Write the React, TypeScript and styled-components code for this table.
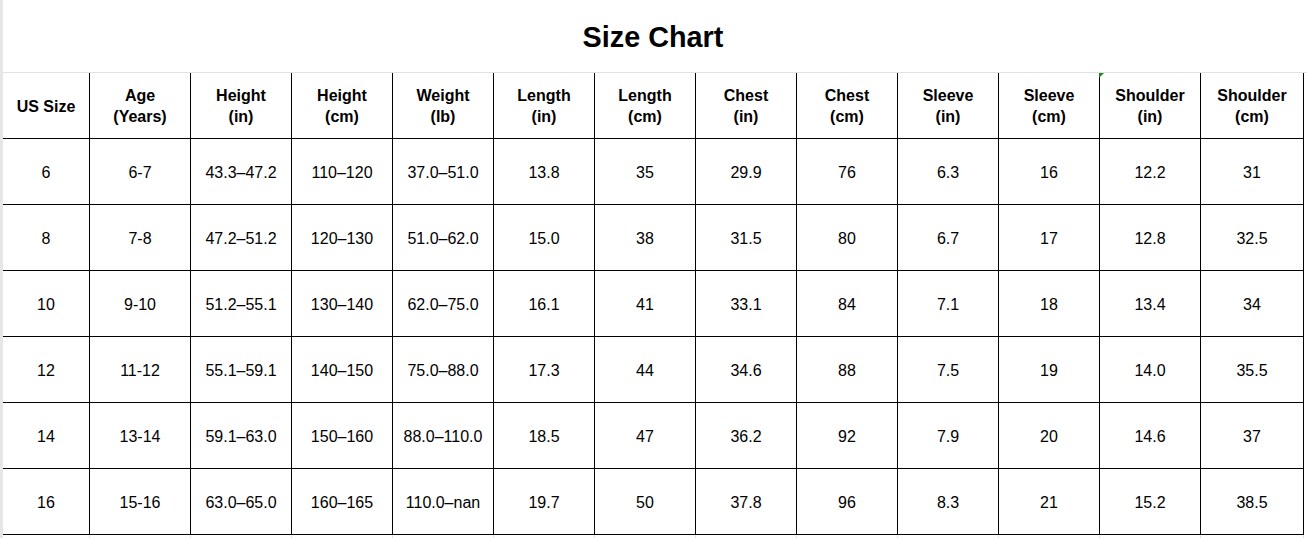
import React from "react";
import styled, { createGlobalStyle } from "styled-components";

const GlobalStyle = createGlobalStyle`
  html, body {
    margin: 0;
    padding: 0;
    background: #ffffff;
  }
  body {
    font-family: "Liberation Sans", Arial, sans-serif;
    color: #000000;
  }
`;

const Sheet = styled.div`
  width: 1304px;
  height: 538px;
  overflow: hidden;
  border-left: 3px solid #e6e6e6;
  background: #ffffff;
`;

const TitleBar = styled.div`
  height: 72px;
  display: flex;
  align-items: center;
  justify-content: center;
  border-bottom: 1px solid #e2e2e2;
  padding-right: 4px;
`;

const Title = styled.h1`
  margin: 0;
  font-size: 28.8px;
  font-weight: 700;
  line-height: 1;
  padding-top: 2px;
`;

const Grid = styled.div`
  display: grid;
  grid-template-columns: 87px repeat(11, 101px) 103px;
`;

const Cell = styled.div<{ $head?: boolean; $ghost?: boolean }>`
  position: relative;
  box-sizing: border-box;
  height: ${(p) => (p.$ghost ? "4px" : "66px")};
  border-right: 1px solid ${(p) => (p.$ghost ? "#e2e2e2" : "#000000")};
  border-bottom: ${(p) => (p.$ghost ? "none" : "1px solid #000000")};
  display: flex;
  align-items: center;
  justify-content: center;
  text-align: center;
  font-size: 16px;
  font-weight: ${(p) => (p.$head ? 700 : 400)};
  line-height: ${(p) => (p.$head ? "21px" : "18px")};
  padding-top: ${(p) => (p.$head ? "1px" : "3px")};
`;

const ErrorMark = styled.span`
  position: absolute;
  top: 0;
  left: -1px;
  width: 0;
  height: 0;
  border-top: 5px solid #1b8a1b;
  border-right: 5px solid transparent;
`;

const headers: string[][] = [
  ["US Size"],
  ["Age", "(Years)"],
  ["Height", "(in)"],
  ["Height", "(cm)"],
  ["Weight", "(lb)"],
  ["Length", "(in)"],
  ["Length", "(cm)"],
  ["Chest", "(in)"],
  ["Chest", "(cm)"],
  ["Sleeve", "(in)"],
  ["Sleeve", "(cm)"],
  ["Shoulder", "(in)"],
  ["Shoulder", "(cm)"],
];

const rows: string[][] = [
  ["6", "6-7", "43.3–47.2", "110–120", "37.0–51.0", "13.8", "35", "29.9", "76", "6.3", "16", "12.2", "31"],
  ["8", "7-8", "47.2–51.2", "120–130", "51.0–62.0", "15.0", "38", "31.5", "80", "6.7", "17", "12.8", "32.5"],
  ["10", "9-10", "51.2–55.1", "130–140", "62.0–75.0", "16.1", "41", "33.1", "84", "7.1", "18", "13.4", "34"],
  ["12", "11-12", "55.1–59.1", "140–150", "75.0–88.0", "17.3", "44", "34.6", "88", "7.5", "19", "14.0", "35.5"],
  ["14", "13-14", "59.1–63.0", "150–160", "88.0–110.0", "18.5", "47", "36.2", "92", "7.9", "20", "14.6", "37"],
  ["16", "15-16", "63.0–65.0", "160–165", "110.0–nan", "19.7", "50", "37.8", "96", "8.3", "21", "15.2", "38.5"],
];

export default function App() {
  return (
    <>
      <GlobalStyle />
      <Sheet>
        <TitleBar>
          <Title>Size Chart</Title>
        </TitleBar>
        <Grid>
          {headers.map((lines, i) => (
            <Cell key={"h" + i} $head>
              {i === 11 && <ErrorMark />}
              <div>
                {lines.map((l, j) => (
                  <div key={j}>{l}</div>
                ))}
              </div>
            </Cell>
          ))}
          {rows.map((row, r) =>
            row.map((v, c) => <Cell key={r + "-" + c}>{v}</Cell>)
          )}
          {headers.map((_, i) => (
            <Cell key={"g" + i} $ghost />
          ))}
        </Grid>
      </Sheet>
    </>
  );
}
